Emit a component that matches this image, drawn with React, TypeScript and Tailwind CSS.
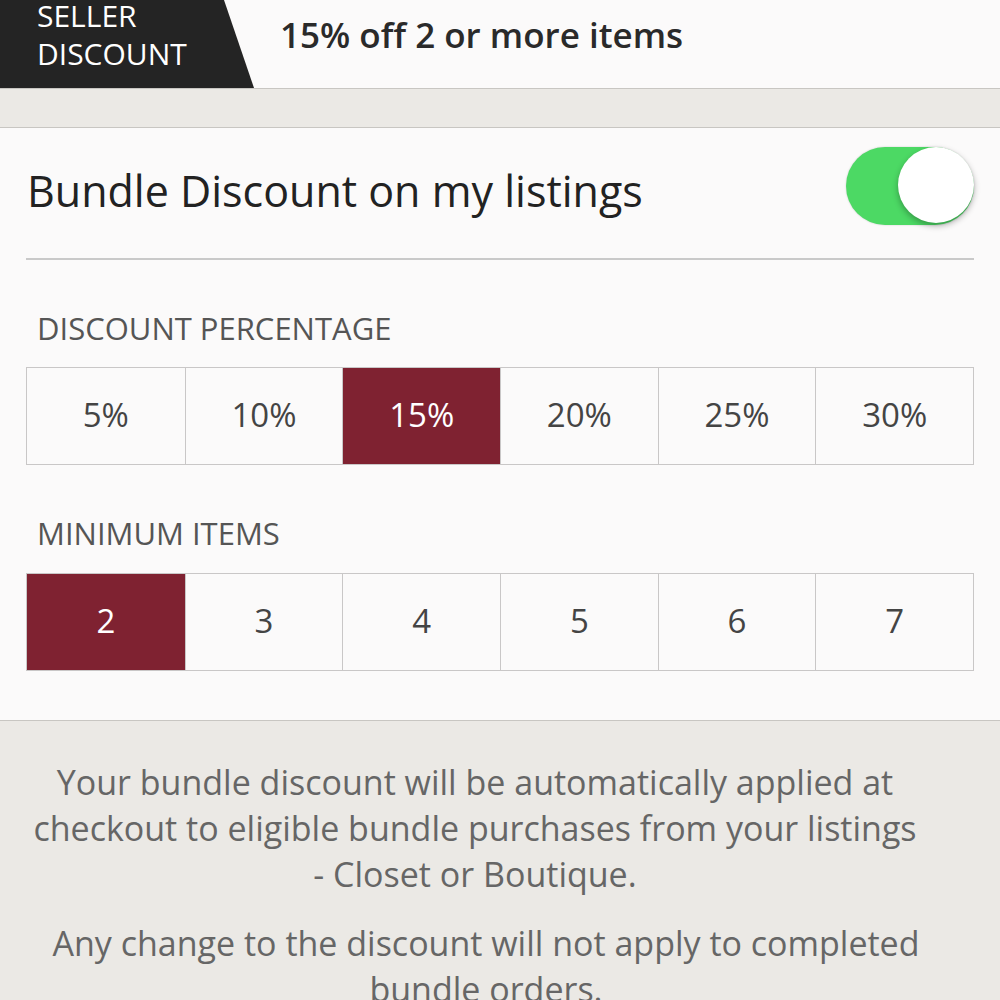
const percents = ["5%", "10%", "15%", "20%", "25%", "30%"];
const items = ["2", "3", "4", "5", "6", "7"];

function Segmented({ options, selected }: { options: string[]; selected: string }) {
  return (
    <div className="grid h-[98px] grid-cols-6 border border-[#c9c7c7]">
      {options.map((o, i) => (
        <div
          key={o}
          className={
            "flex items-center justify-center pb-[2px] text-[33px] " +
            (i > 0 ? "border-l border-[#c9c7c7] " : "") +
            (o === selected ? "bg-[#7f2231] text-white" : "bg-[#fbfafa] text-[#444]")
          }
        >
          {o}
        </div>
      ))}
    </div>
  );
}

export default function App() {
  return (
    <div
      className="h-[1000px] w-[1000px] overflow-hidden bg-[#ebe9e5]"
      style={{ fontFamily: "'Open Sans', sans-serif" }}
    >
      {/* header */}
      <div className="flex h-[89px] items-stretch border-b border-[#c8c6c2] bg-[#fbfafa]">
        <div className="w-[254px] shrink-0 bg-[#242424] [clip-path:polygon(0_0,224px_0,254px_100%,0_100%)]">
          <div className="-mt-[3px] pl-[37px] text-[30px] leading-[38px] text-white">
            SELLER
            <br />
            DISCOUNT
          </div>
        </div>
        <div className="flex items-center pl-[26px] pb-[18px] text-[35px] font-semibold text-[#2a2a2a]">
          15% off 2 or more items
        </div>
      </div>

      <div className="h-[39px] border-b border-[#c8c6c2]" />

      {/* card */}
      <div className="h-[593px] border-b border-[#c8c6c2] bg-[#fbfafa] px-[26px]">
        <div className="flex h-[132px] items-center justify-between border-b-2 border-[#c9c9c9]">
          <div className="pl-[1px] pb-[4px] text-[43px] text-[#222]">Bundle Discount on my listings</div>
          <div className="relative mb-[14px] h-[78px] w-[128px] rounded-full bg-[#4cd964] shadow-[0_0_2px_rgba(0,0,0,0.2)]">
            <div className="absolute right-0 top-0 h-[76px] w-[76px] rounded-full bg-white shadow-[0_3px_6px_rgba(0,0,0,0.3)]" />
          </div>
        </div>

        <div className="pb-[22px] pl-[11px] pt-[51px] text-[31px] leading-[34px] text-[#555]">DISCOUNT PERCENTAGE</div>
        <Segmented options={percents} selected="15%" />

        <div className="pb-[23px] pl-[11px] pt-[51px] text-[31px] leading-[34px] text-[#555]">MINIMUM ITEMS</div>
        <Segmented options={items} selected="2" />
      </div>

      {/* footer notes */}
      <div className="pt-[38px] text-center text-[34px] leading-[46px] text-[#666]">
        <p className="pr-[50px]">
          Your bundle discount will be automatically applied at
          <br />
          checkout to eligible bundle purchases from your listings
          <br />- Closet or Boutique.
        </p>
        <p className="mt-[23px] pr-[28px]">
          Any change to the discount will not apply to completed
          <br />
          bundle orders.
        </p>
      </div>
    </div>
  );
}
